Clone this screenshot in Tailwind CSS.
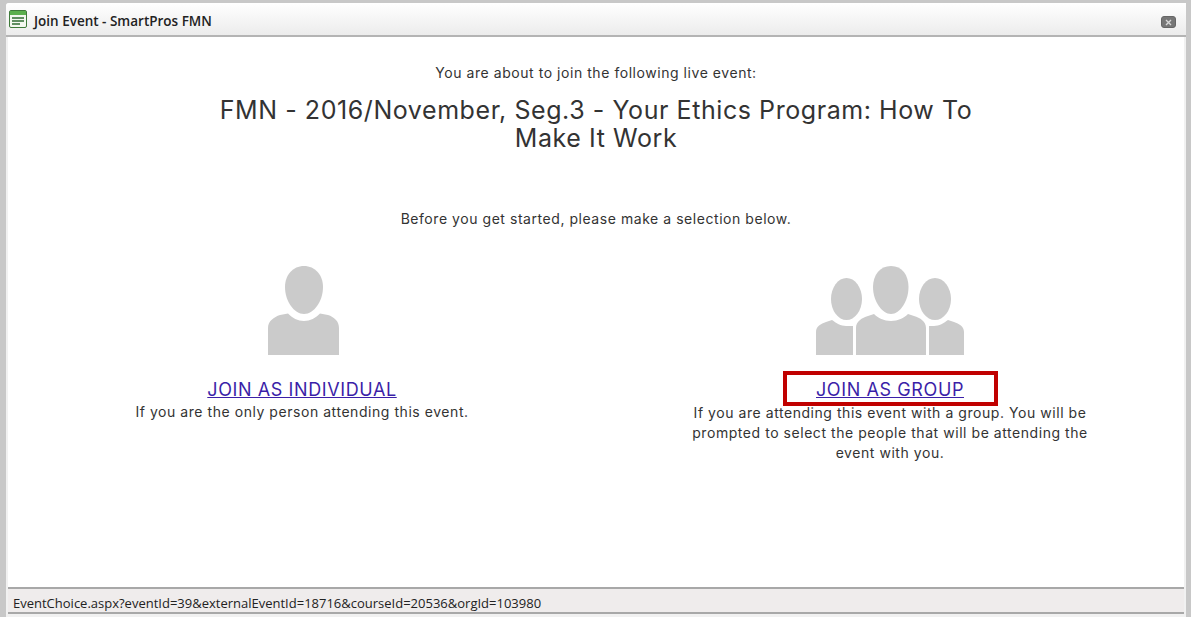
<!DOCTYPE html>
<html lang="en">

<head>
    <meta charset="UTF-8">
    <title>Join Event - SmartPros FMN</title>
    <script src="https://cdn.jsdelivr.net/npm/@tailwindcss/browser@4"></script>
</head>

<body class="bg-[#c8c8c8] overflow-hidden">
    <div class="h-[617px] pt-[3px] pl-[6px] pr-[5px] flex flex-col">
        <div class="flex-1 flex flex-col bg-[#f1f1f1] pb-[3px] rounded-tl-[3px]">
            <!-- Title bar -->
            <div class="h-[34px] shrink-0 flex items-center justify-between pl-[3px] pr-[10px] bg-gradient-to-b from-white to-[#ececec] border-b-2 border-[#b4b4b4] rounded-tl-[3px]">
                <div class="flex items-center gap-[7px]">
                    <svg width="18" height="18" viewBox="0 0 18 18">
                        <rect x="0.5" y="0.5" width="17" height="17" rx="1.5" fill="#f4f8f0" stroke="#3f7a3a" />
                        <rect x="1" y="1" width="16" height="4" fill="#5cb04e" />
                        <path d="M3 8h12M3 11h12M3 14h8" stroke="#2f6b32" stroke-width="1.3" />
                    </svg>
                    <span class="mt-[5px] font-['Open_Sans',sans-serif] font-semibold text-[13.500px] text-[#222]">Join Event - SmartPros FMN</span>
                </div>
                <div class="w-[15px] h-[12px] mt-[6px] rounded-[3px] bg-[#777] border border-[#666] flex items-center justify-center">
                    <svg width="7" height="7" viewBox="0 0 7 7">
                        <path d="M1 1l5 5M6 1l-5 5" stroke="#d8d8d8" stroke-width="1.4" />
                    </svg>
                </div>
            </div>

            <!-- Content -->
            <main class="flex-1 mx-[2px] bg-white flex flex-col items-center font-['Inter',sans-serif] text-[#333]">
                <p class="mt-[26px] text-[14px] tracking-[0.55px] leading-[20px]">You are about to join the following live event:</p>
                <h1 class="mt-[13px] w-[790px] text-center text-[25px] leading-[28px] tracking-[0.57px]">FMN - 2016/November, Seg.3 - Your Ethics Program: How To Make It Work</h1>
                <p class="mt-[57px] text-[14px] tracking-[0.55px] leading-[20px]">Before you get started, please make a selection below.</p>

                <div class="w-full mt-[37px] grid grid-cols-2">
                    <!-- Individual -->
                    <div class="flex flex-col items-center">
                        <svg class="ml-[2px]" width="71" height="89" viewBox="0 0 71 89" fill="#cbcbcb">
                            <path d="M36 0C47 0 55 9 55 21C55 35 46 48 36 48C26 48 17 35 17 21C17 9 25 0 36 0Z" />
                            <path d="M0 89V62C0 55 6 51 12 49L20 47.500C24 52 30 55 36 55C42 55 48 52 52 47.500L60 49C66 51 71 55 71 62V89Z" />
                        </svg>
                        <a href="#" class="mt-[23px] text-[18px] leading-[24px] tracking-[0.6px] text-[#3b1fa8] underline">JOIN AS INDIVIDUAL</a>
                        <p class="text-[14px] leading-[20px] tracking-[0.55px]">If you are the only person attending this event.</p>
                    </div>
                    <!-- Group -->
                    <div class="flex flex-col items-center">
                        <svg width="148" height="89" viewBox="0 0 148 89" fill="#cbcbcb">
                            <ellipse cx="30.500" cy="33" rx="15.500" ry="21" />
                            <path d="M0 89V66C0 60 5 58 10 56L16 54C20 57 25 60 30 60H37V89Z" />
                            <path d="M75 0C86 0 92.500 9 92.500 21C92.500 35 84 48 75 48C66 48 57 35 57 21C57 9 64 0 75 0Z" />
                            <path d="M40 89V62C40 55 46 52 52 50L58 48C62 52 68 55 75 55C82 55 88 52 92 48L98 50C104 52 110 55 110 62V89Z" />
                            <ellipse cx="119" cy="33" rx="16" ry="21" />
                            <path d="M148 89V66C148 60 143 58 138 56L132 54C128 57 123 60 118 60H113V89Z" />
                        </svg>
                        <a href="#" class="mt-[16px] h-[35px] w-[215px] border-[4px] border-[#c00000] flex items-center justify-center pt-[1px] text-[18px] tracking-[0.6px] text-[#3b1fa8] underline">JOIN AS GROUP</a>
                        <p class="w-[410px] text-center text-[14px] leading-[20px] tracking-[0.55px] mt-[-3px]">If you are attending this event with a group. You will be prompted to select the people that will be attending the event with you.</p>
                    </div>
                </div>
            </main>

            <!-- Status bar -->
            <div class="h-[27px] shrink-0 mx-[2px] bg-[#efecec] border-t-2 border-b-2 border-[#a8a8a8] pl-[5px] pt-[6px] flex items-center font-['Open_Sans',sans-serif] text-[13px] text-[#222]">EventChoice.aspx?eventId=39&amp;externalEventId=18716&amp;courseId=20536&amp;orgId=103980</div>
        </div>
    </div>
</body>

</html>
